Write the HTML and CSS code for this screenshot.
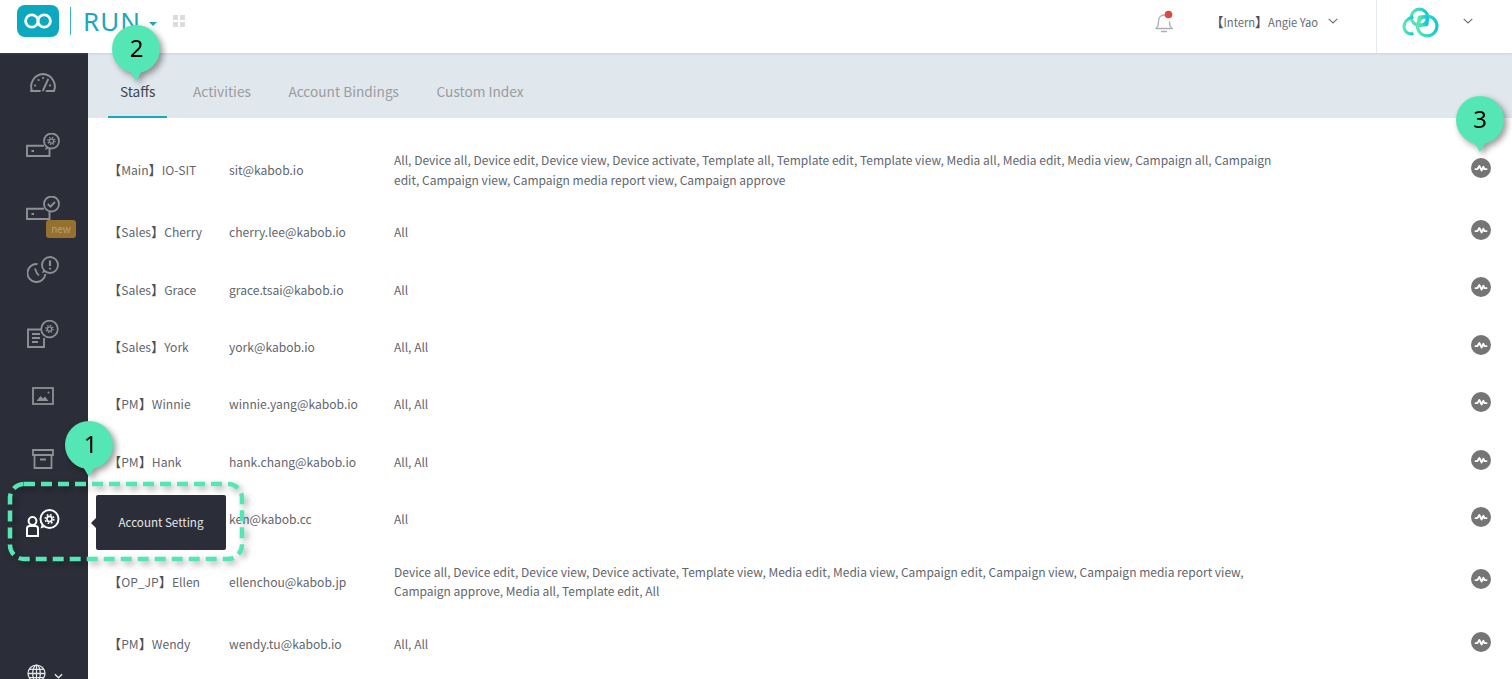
FILE: index.html
```html
<!DOCTYPE html>
<html lang="en">
<head>
<meta charset="utf-8">
<title>Account Setting</title>
<link rel="stylesheet" href="styles.css">
</head>
<body>
<svg class="defs" width="0" height="0" aria-hidden="true">
  <defs>
    <symbol id="pulse" viewBox="0 0 18 18">
      <circle cx="9" cy="9" r="9" fill="#757575"/>
      <path d="M4 10h1.800l1.700-2.800 2.100 4 1.500-3.300 1 2.100h1.900" fill="none" stroke="#fff" stroke-width="1.700" stroke-linejoin="round" stroke-linecap="round"/>
    </symbol>
    <symbol id="gear" viewBox="0 0 12 12">
      <circle cx="6" cy="6" r="2.600" fill="none" stroke="currentColor" stroke-width="1.600"/>
      <circle cx="6" cy="6" r="4.300" fill="none" stroke="currentColor" stroke-width="1.600" stroke-dasharray="1.700 1.680"/>
    </symbol>
  </defs>
</svg>
<header class="topbar">
  <div class="brand">
    <svg class="logo" viewBox="0 0 42 32"><rect width="42" height="32" rx="8" fill="#0ba8bf"/><g fill="none" stroke="#fff" stroke-width="2.800"><circle cx="14.800" cy="16" r="6.200"/><circle cx="27.200" cy="16" r="6.200"/></g></svg>
    <span class="brand-divider"></span>
    <span class="brand-name">RUN</span>
    <span class="brand-caret"></span>
    <span class="apps"><i></i><i></i><i></i><i></i></span>
  </div>
  <div class="top-right">
    <svg class="bell" viewBox="0 0 20 24"><path d="M2 18.500c2-1.500 2.500-3 2.500-6.500 0-4 2.200-7 5.500-7 1.500 0 3 .7 4 2M15.500 12c0 3.500.5 5 2.500 6.500H2M7.500 21.500h5" fill="none" stroke="#a9b0b8" stroke-width="1.300" stroke-linecap="round"/><circle cx="14.500" cy="4.500" r="3.800" fill="#e0483c"/></svg>
    <span class="user"><span class="br">【</span>Intern<span class="br">】</span>Angie Yao</span>
    <svg class="chev user-chev" viewBox="0 0 10 6"><path d="M.7.8 5 5l4.300-4.200" fill="none" stroke="#666d75" stroke-width="1.100"/></svg>
    <div class="org">
      <svg class="org-logo" viewBox="0 0 36 30"><defs><linearGradient id="g" x1="0" x2="1"><stop offset="0" stop-color="#5be6b4"/><stop offset="1" stop-color="#0cc9d8"/></linearGradient></defs><g fill="none" stroke="url(#g)" stroke-width="3"><circle cx="17" cy="10" r="8"/><circle cx="24.500" cy="18.500" r="9.500"/><path d="M11 9.500C5 11 1.500 15 2 20c.4 4 5 7.500 9 5.500"/><rect x="16.500" y="9.500" width="8" height="8" rx="2"/></g></svg>
      <svg class="chev" viewBox="0 0 10 6"><path d="M.7.8 5 5l4.300-4.200" fill="none" stroke="#666d75" stroke-width="1.100"/></svg>
    </div>
  </div>
</header>
<div class="body">
  <nav class="sidebar">
    <a class="nav"><svg class="icon-dash" viewBox="0 0 28 19"><path d="M3 18A12.500 12.500 0 0 1 14 1a12.500 12.500 0 0 1 11 17h-7.500M11 18H1.800M19 6.500L14 17.500" fill="none" stroke="#8e9095" stroke-width="1.900" stroke-linecap="round"/><path d="M6 12.500h.1M9.500 7h.1M14 5h.1M21 12.500h.1" stroke="#8e9095" stroke-width="2.200" stroke-linecap="round"/></svg></a>
    <a class="nav"><svg class="icon-dev" viewBox="0 0 34 25"><path d="M18 12.800H1V23H23.500V15.500" fill="none" stroke="#8e9095" stroke-width="1.900"/><path d="M5.500 18h2.500" stroke="#8e9095" stroke-width="2"/><path d="M20.500 14l-2 2.500 4-.5" fill="#8e9095"/><circle cx="25.500" cy="8" r="7.500" fill="#2b2e38" stroke="#8e9095" stroke-width="1.800"/><use href="#gear" x="20.500" y="3" width="10" height="10" color="#8e9095"/></svg></a>
    <a class="nav nav-new"><svg class="icon-dev" viewBox="0 0 34 25"><path d="M18 12.800H1V23H23.500V15.500" fill="none" stroke="#8e9095" stroke-width="1.900"/><path d="M5.500 18h2.500" stroke="#8e9095" stroke-width="2"/><circle cx="25.500" cy="8" r="7.500" fill="#2b2e38" stroke="#8e9095" stroke-width="1.800"/><path d="M21.800 8l2.700 2.700 4.500-4.700" fill="none" stroke="#8e9095" stroke-width="1.900"/></svg><span class="new-badge">new</span></a>
    <a class="nav"><svg class="icon-clock" viewBox="0 0 33 30"><path d="M10.500 8.100A9 9 0 1 0 18.400 18" fill="none" stroke="#8e9095" stroke-width="1.900"/><path d="M8 12.500l1.800 4.500 2.200 2.500" fill="none" stroke="#8e9095" stroke-width="1.800"/><circle cx="23" cy="9" r="8" fill="#2b2e38" stroke="#8e9095" stroke-width="1.800"/><path d="M16.500 13.500l-1.500 3.500 4-1" fill="#8e9095"/><path d="M23 4.500v5.500M23 11.800v1.800" stroke="#8e9095" stroke-width="2.200"/></svg></a>
    <a class="nav"><svg class="icon-doc" viewBox="0 0 32 28"><path d="M15 9.500H1V27H17V18" fill="none" stroke="#8e9095" stroke-width="1.900"/><path d="M5 14h8M5 18h8M5 22h6" stroke="#8e9095" stroke-width="1.800"/><circle cx="22.500" cy="9" r="8.300" fill="#2b2e38" stroke="#8e9095" stroke-width="1.800"/><use href="#gear" x="17.500" y="4" width="10" height="10" color="#8e9095"/></svg></a>
    <a class="nav"><svg class="icon-img" viewBox="0 0 22 18"><rect x="1" y="1" width="20" height="16" fill="none" stroke="#8e9095" stroke-width="1.800"/><path d="M4.500 14l4-5 2.500 2.500 2-2 3.500 4.500z" fill="#8e9095"/><circle cx="16.500" cy="5.500" r="1" fill="#8e9095"/></svg></a>
    <a class="nav"><svg class="icon-box" viewBox="0 0 22 20"><path d="M1 1h20v5H1zM2.500 6v13h17V6M8 10.500h6" fill="none" stroke="#8e9095" stroke-width="1.800"/></svg></a>
    <a class="nav nav-active"><svg class="icon-acct" viewBox="0 0 34 30"><circle cx="6.500" cy="13" r="3.900" fill="none" stroke="#fff" stroke-width="2"/><path d="M1 28v-7.500C1 19 2 18 3.500 18h6c1.500 0 2.500 1 2.500 2.500V28z" fill="none" stroke="#fff" stroke-width="2"/><circle cx="23.500" cy="11" r="9" fill="#2b2e38" stroke="#fff" stroke-width="2"/><path d="M16 16l-1.500 4.500 4.500-1.500" fill="#fff"/><use href="#gear" x="17.500" y="5" width="12" height="12" color="#fff"/></svg></a>
    <div class="lang">
      <svg class="globe" viewBox="0 0 18 18"><g fill="none" stroke="#e4e5e7" stroke-width="1.200"><circle cx="9" cy="9" r="8"/><ellipse cx="9" cy="9" rx="3.600" ry="8"/><path d="M9 1v16M1 9h16M2.200 5h13.600M2.200 13h13.600"/></g></svg>
      <svg class="lang-chev" viewBox="0 0 10 6"><path d="M1 1l4 4 4-4" fill="none" stroke="#e4e5e7" stroke-width="1.500"/></svg>
    </div>
  </nav>
  <main class="content">
    <div class="tabs">
      <a class="tab tab-active">Staffs</a>
      <a class="tab">Activities</a>
      <a class="tab">Account Bindings</a>
      <a class="tab">Custom Index</a>
    </div>
    <div class="list">
      <div class="row row-tall"><span><span class="br">【</span>Main<span class="br">】</span>IO-SIT</span><span>sit@kabob.io</span><span class="perms">All, Device all, Device edit, Device view, Device activate, Template all, Template edit, Template view, Media all, Media edit, Media view, Campaign all, Campaign edit, Campaign view, Campaign media report view, Campaign approve</span><svg class="act"><use href="#pulse"/></svg></div>
      <div class="row"><span><span class="br">【</span>Sales<span class="br">】</span>Cherry</span><span>cherry.lee@kabob.io</span><span class="perms">All</span><svg class="act"><use href="#pulse"/></svg></div>
      <div class="row"><span><span class="br">【</span>Sales<span class="br">】</span>Grace</span><span>grace.tsai@kabob.io</span><span class="perms">All</span><svg class="act"><use href="#pulse"/></svg></div>
      <div class="row"><span><span class="br">【</span>Sales<span class="br">】</span>York</span><span>york@kabob.io</span><span class="perms">All, All</span><svg class="act"><use href="#pulse"/></svg></div>
      <div class="row"><span><span class="br">【</span>PM<span class="br">】</span>Winnie</span><span>winnie.yang@kabob.io</span><span class="perms">All, All</span><svg class="act"><use href="#pulse"/></svg></div>
      <div class="row"><span><span class="br">【</span>PM<span class="br">】</span>Hank</span><span>hank.chang@kabob.io</span><span class="perms">All, All</span><svg class="act"><use href="#pulse"/></svg></div>
      <div class="row"><span></span><span>ken@kabob.cc</span><span class="perms">All</span><svg class="act"><use href="#pulse"/></svg></div>
      <div class="row row-tall"><span><span class="br">【</span>OP_JP<span class="br">】</span>Ellen</span><span>ellenchou@kabob.jp</span><span class="perms">Device all, Device edit, Device view, Device activate, Template view, Media edit, Media view, Campaign edit, Campaign view, Campaign media report view, Campaign approve, Media all, Template edit, All</span><svg class="act"><use href="#pulse"/></svg></div>
      <div class="row"><span><span class="br">【</span>PM<span class="br">】</span>Wendy</span><span>wendy.tu@kabob.io</span><span class="perms">All, All</span><svg class="act"><use href="#pulse"/></svg></div>
    </div>
  </main>
</div>
<div class="tooltip">Account Setting</div>
<svg class="frame" viewBox="0 0 240 84"><rect x="3" y="3" width="232" height="75" rx="14" fill="none" stroke="#55e6b6" stroke-width="4.500" stroke-dasharray="11 6"/></svg>
<div class="marker m1">1</div>
<div class="marker m2">2</div>
<div class="marker m3">3</div>
</body>
</html>
```
FILE: styles.css
```css
* { box-sizing: border-box; }
html, body { margin: 0; height: 100%; overflow: hidden; }
body { font-family: "Noto Sans CJK TC", "Noto Sans", sans-serif; font-size: 12.100px; color: #5f666e; background: #fff; display: flex; flex-direction: column; }
.defs { position: absolute; }
.br { font-size: 13.200px; font-weight: 500; color: #4a5057; }
.topbar { height: 53px; flex: none; display: flex; justify-content: space-between; align-items: stretch; background: #fff; position: relative; box-shadow: 0 1px 2px rgba(120,135,150,.2); z-index: 1; }
.brand { display: flex; align-items: center; padding-left: 17px; padding-bottom: 11px; }
.logo { width: 42px; height: 32px; }
.brand-divider { width: 1px; height: 28px; background: #39b3c6; margin-left: 11px; }
.brand-name { font-family: "Noto Sans", sans-serif; font-size: 26px; font-weight: 400; letter-spacing: 1px; color: #1ba8be; margin-left: 12px; line-height: 32px; margin-top: -1px; }
.brand-caret { width: 0; height: 0; border: 4px solid transparent; border-top: 4px solid #1ba8be; border-bottom: 0; margin-left: 8px; margin-top: 5px; }
.apps { display: grid; grid-template-columns: 5px 5px; gap: 2px; margin-left: 16px; }
.apps i { width: 5px; height: 5px; background: #dcdcdc; }
.top-right { display: flex; align-items: center; padding-bottom: 8px; }
.bell { width: 20px; height: 24px; margin-top: -2px; }
.user { font-size: 11.200px; color: #666d75; margin-left: 37px; margin-top: -2px; }
.user .br { font-size: 13px; }
.chev { width: 10px; height: 6px; }
.user-chev { margin-left: 10px; margin-right: 38px; margin-top: -3px; }
.org { width: 136px; height: 53px; margin-bottom: -8px; border-left: 1px solid #e3e9ee; display: flex; align-items: center; padding-left: 25px; padding-bottom: 8px; }
.org-logo { width: 37px; height: 31px; margin-right: 24px; }
.org .chev { margin-top: -3px; }
.body { flex: 1; display: flex; min-height: 0; }
.sidebar { width: 88px; flex: none; background: #2b2e38; display: flex; flex-direction: column; position: relative; }
.nav { height: 62.700px; display: flex; align-items: center; justify-content: center; position: relative; padding: 0 2px 3px 0; }
.icon-dash { width: 28px; height: 19px; }
.icon-dev { width: 34px; height: 25px; }
.icon-clock { width: 33px; height: 30px; }
.icon-doc { width: 32px; height: 28px; }
.icon-img { width: 22px; height: 18px; }
.icon-box { width: 22px; height: 20px; }
.icon-acct { width: 34px; height: 30px; }
.nav-active { margin-top: 1px; }
.new-badge { position: absolute; left: 46px; top: 42px; width: 30px; height: 18px; border-radius: 3px; background: #96702f; color: #b6a17c; font-size: 10px; line-height: 17px; text-align: center; }
.lang { position: absolute; left: 27px; bottom: -4px; display: flex; align-items: center; gap: 8px; }
.globe { width: 19px; height: 19px; }
.lang-chev { width: 9px; height: 6px; margin-top: 5px; }
.content { flex: 1; min-width: 0; }
.tabs { height: 65px; background: #e0e7ed; display: flex; padding-left: 20px; gap: 13.500px; }
.tab { position: relative; padding: 0 12px; line-height: 77px; height: 65px; font-size: 13.700px; color: #9b9c9e; white-space: nowrap; }
.tab-active { color: #40464d; }
.tab-active::after { content: ""; position: absolute; left: 0; right: 0; bottom: 0; height: 2px; background: #17a8bd; }
.list { padding: 18px 0 0 20px; }
.row { display: grid; grid-template-columns: 121px 165px 890px 1fr; height: 57.400px; align-items: center; line-height: 19.500px; position: relative; }
.row-tall { height: 67.300px; }
.perms { font-size: 12px; }
.act { position: absolute; left: 1363px; top: 50%; width: 20px; height: 20px; margin-top: -12px; }
.tooltip { position: absolute; left: 96px; top: 495px; width: 130px; height: 55px; padding-bottom: 2px; background: #2b2e38; border-radius: 2px; color: #e8e8ea; font-size: 11.600px; display: flex; align-items: center; justify-content: center; }
.tooltip::before { content: ""; position: absolute; left: -5px; top: 23px; border: 5px solid transparent; border-right-color: #2b2e38; border-left: 0; }
.frame { position: absolute; left: 7px; top: 481px; width: 240px; height: 84px; filter: drop-shadow(3px 3px 3px rgba(0,0,0,.35)); }
.marker { position: absolute; z-index: 2; width: 48px; height: 48px; border-radius: 50%; background: #55e6b6; color: #000; font-family: "Noto Sans", sans-serif; font-size: 24px; line-height: 46px; text-align: center; filter: drop-shadow(3px 3px 3px rgba(0,0,0,.4)); }
.marker::after { content: ""; position: absolute; left: 17px; top: 44px; border: 7px solid transparent; border-top: 12px solid #55e6b6; border-bottom: 0; }
.m1 { left: 65px; top: 421px; text-indent: 3px; }
.m2 { left: 112px; top: 25px; text-indent: 1px; line-height: 45px; }
.m3 { left: 1456px; top: 96px; }
```
